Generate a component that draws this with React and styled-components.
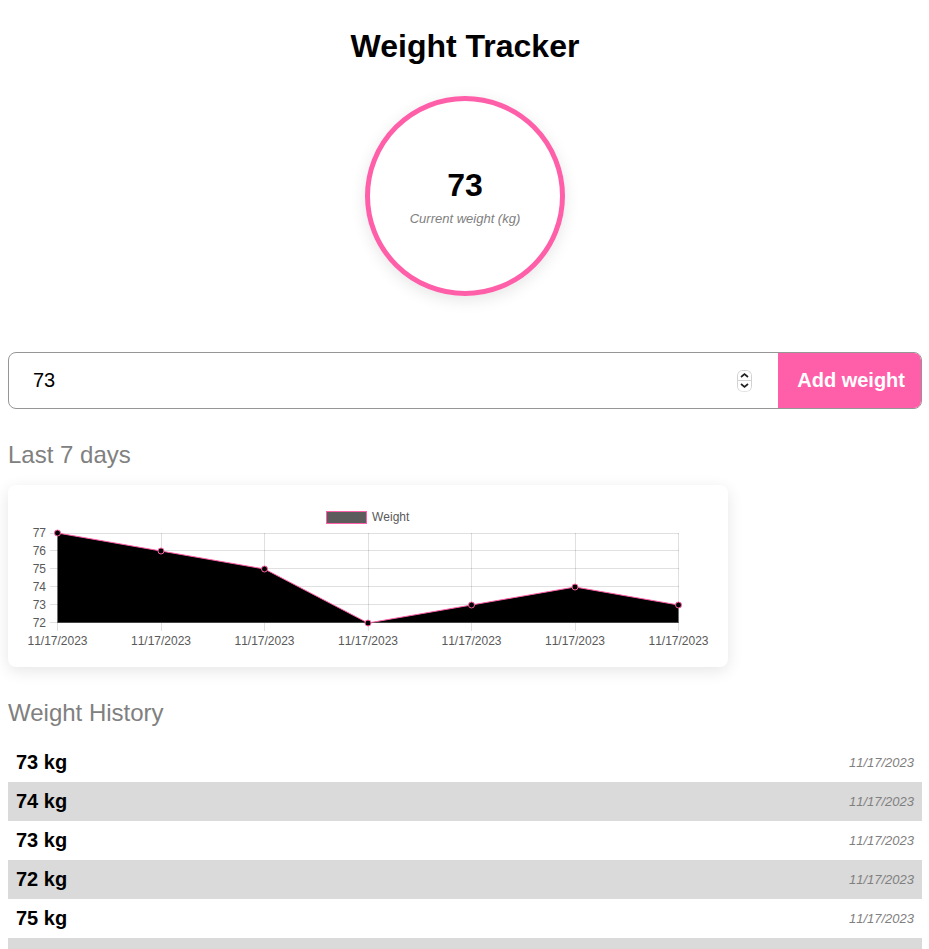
import React, { useState } from "react";
import styled, { createGlobalStyle } from "styled-components";

const PINK = "#ff5ea8";

const GlobalStyle = createGlobalStyle`
  * {
    box-sizing: border-box;
  }
  body {
    margin: 0;
    background: #fff;
    color: #000;
    font-family: "Liberation Sans", Helvetica, Arial, sans-serif;
    overflow-x: hidden;
  }
  ::-webkit-scrollbar {
    display: none;
  }
`;

const Page = styled.main`
  padding: 28px 7px 8px 8px;
`;

const Title = styled.h1`
  margin: 0 0 32px;
  font-size: 32px;
  line-height: 36px;
  text-align: center;
`;

const CurrentCircle = styled.div`
  display: flex;
  flex-direction: column;
  align-items: center;
  justify-content: center;
  gap: 8px;
  width: 200px;
  height: 200px;
  margin: 0 auto 56px;
  padding-top: 2px;
  border: 5px solid ${PINK};
  border-radius: 50%;
  box-shadow: 0 4px 16px rgba(0, 0, 0, 0.1);
`;

const CurrentValue = styled.span`
  font-size: 32px;
  line-height: 36px;
  font-weight: bold;
`;

const Note = styled.span`
  color: #808080;
  font-size: 13px;
  line-height: 16px;
  font-style: italic;
  font-kerning: none;
`;

const WeightForm = styled.form`
  display: flex;
  height: 57px;
  border: 1px solid #969696;
  border-radius: 8px;
  overflow: hidden;
`;

const WeightInput = styled.input`
  flex: 1;
  min-width: 0;
  padding: 0 24px;
  border: 0;
  outline: 0;
  background: transparent;
  color: #000;
  font: 20px "Liberation Sans", Helvetica, Arial, sans-serif;
  appearance: textfield;
  &::-webkit-inner-spin-button,
  &::-webkit-outer-spin-button {
    appearance: none;
    margin: 0;
  }
`;

const Stepper = styled.div`
  display: flex;
  flex-direction: column;
  align-self: center;
  width: 15px;
  height: 22px;
  margin-right: 26px;
  border: 1px solid #d2d2d2;
  border-bottom-color: #e4e4e4;
  border-radius: 6px;
  overflow: hidden;
`;

const StepButton = styled.button`
  display: flex;
  flex: 1;
  align-items: center;
  justify-content: center;
  padding: 0;
  border: 0;
  background: #fff;
  & + & {
    border-top: 1px solid #d2d2d2;
  }
`;

const AddButton = styled.button`
  padding: 0 16px 0 19px;
  border: 0;
  background: ${PINK};
  color: #fff;
  font: bold 20px "Liberation Sans", Helvetica, Arial, sans-serif;
  font-kerning: none;
  cursor: pointer;
`;

const SectionTitle = styled.h2`
  margin: 32px 0 16px;
  color: #808080;
  font-size: 24px;
  line-height: 28px;
  font-weight: normal;
`;

const ChartCard = styled.section`
  max-width: 720px;
  padding: 16px;
  border-radius: 8px;
  box-shadow: 0 4px 16px rgba(0, 0, 0, 0.1);
`;

const Chart = styled.svg`
  display: block;
  width: 100%;
  height: auto;
  fill: #595959;
  font-size: 12px;
  font-kerning: none;
`;

const HistoryList = styled.ul`
  margin: 0;
  padding: 0;
  list-style: none;
`;

const HistoryRow = styled.li`
  display: flex;
  align-items: center;
  justify-content: space-between;
  height: 39px;
  padding: 0 8px;
  &:nth-child(even) {
    background: #dadada;
  }
`;

const HistoryWeight = styled.span`
  font-size: 20px;
  line-height: 23px;
  font-weight: bold;
`;

const DATE = "11/17/2023";
const series = [77, 76, 75, 72, 73, 74, 73];
const ticks = [77, 76, 75, 74, 73, 72];
const history = [73, 74, 73, 72, 75, 76, 77];

const plot = { left: 33.5, right: 654.5, top: 32, bottom: 122 };
const xAt = (i) => plot.left + ((plot.right - plot.left) / 6) * i;
const yAt = (v) => plot.bottom - (v - 72) * 18;
const crisp = (n) => Math.floor(n) + 0.5;
const gridY = (v) => (v === ticks[0] ? plot.top + 0.5 : yAt(v) - 0.5);

function WeightChart() {
  const points = series.map((v, i) => `${xAt(i)},${yAt(v)}`).join(" ");
  return (
    <Chart viewBox="0 0 688 150" role="img" aria-label="Weight chart">
      <g stroke="rgba(0,0,0,0.12)">
        {series.map((_, i) => (
          <line key={i} x1={crisp(xAt(i))} x2={crisp(xAt(i))} y1={plot.top} y2={plot.bottom + 8} />
        ))}
        {ticks.map((v) => (
          <line key={v} x1={26} x2={655} y1={gridY(v)} y2={gridY(v)} />
        ))}
      </g>
      <polygon
        points={`${plot.left},${plot.bottom} ${points} ${plot.right},${plot.bottom}`}
        fill="#000"
      />
      <line x1={34} x2={654} y1={121.5} y2={121.5} stroke="#444" />
      <polyline points={points} fill="none" stroke={PINK} />
      {series.map((v, i) => (
        <circle key={i} cx={xAt(i)} cy={yAt(v)} r={3} fill="#000" stroke={PINK} />
      ))}
      <rect x={302.5} y={10.5} width={40} height={12} fill="#5c5c5c" stroke={PINK} />
      <text x={348} y={20}>Weight</text>
      {ticks.map((v) => (
        <text key={v} x={22} y={yAt(v) + 4} textAnchor="end">
          {v}
        </text>
      ))}
      {series.map((_, i) => (
        <text key={i} x={xAt(i)} y={144} textAnchor="middle">
          {DATE}
        </text>
      ))}
    </Chart>
  );
}

function Chevron({ up }) {
  return (
    <svg width="9" height="7" viewBox="0 0 9 7" fill="none" stroke="#222" strokeWidth="1.7">
      <path d={up ? "M1 5 4.5 2 8 5" : "M1 2l3.5 3L8 2"} />
    </svg>
  );
}

export default function App() {
  const [weight, setWeight] = useState(73);
  const step = (by) => setWeight((w) => Number(w) + by);
  return (
    <Page>
      <GlobalStyle />
      <Title>Weight Tracker</Title>
      <CurrentCircle>
        <CurrentValue>73</CurrentValue>
        <Note>Current weight (kg)</Note>
      </CurrentCircle>
      <WeightForm onSubmit={(e) => e.preventDefault()}>
        <WeightInput
          type="number"
          aria-label="Weight in kg"
          value={weight}
          onChange={(e) => setWeight(e.target.value)}
        />
        <Stepper>
          <StepButton type="button" aria-label="Increase weight" onClick={() => step(1)}>
            <Chevron up />
          </StepButton>
          <StepButton type="button" aria-label="Decrease weight" onClick={() => step(-1)}>
            <Chevron />
          </StepButton>
        </Stepper>
        <AddButton type="submit">Add weight</AddButton>
      </WeightForm>
      <SectionTitle>Last 7 days</SectionTitle>
      <ChartCard>
        <WeightChart />
      </ChartCard>
      <SectionTitle>Weight History</SectionTitle>
      <HistoryList>
        {history.map((v, i) => (
          <HistoryRow key={i}>
            <HistoryWeight>{v} kg</HistoryWeight>
            <Note as="time">{DATE}</Note>
          </HistoryRow>
        ))}
      </HistoryList>
    </Page>
  );
}
